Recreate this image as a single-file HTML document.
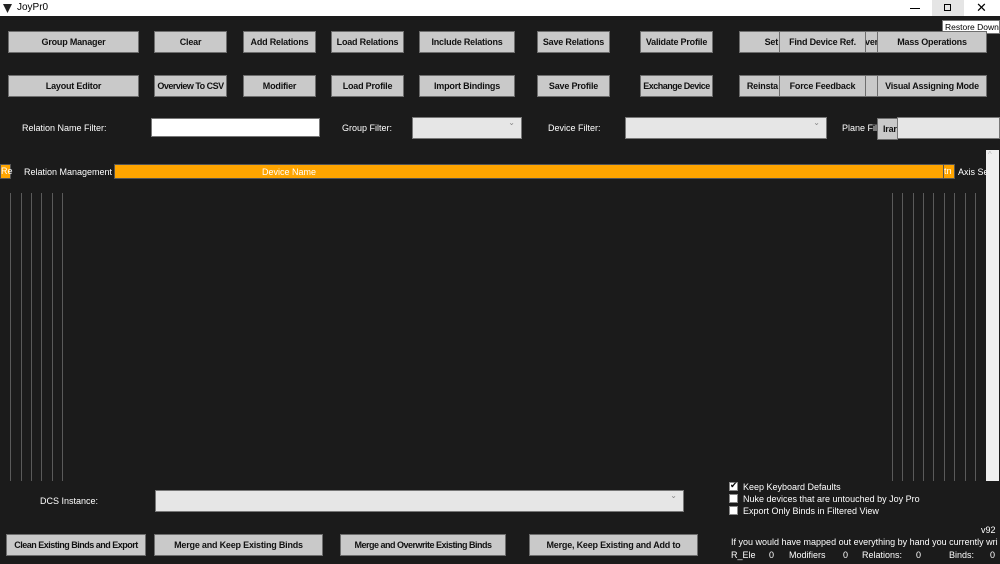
<!DOCTYPE html>
<html><head><meta charset="utf-8"><style>
*{margin:0;padding:0;box-sizing:border-box}
body{width:1000px;height:564px;background:#1b1b1b;font-family:"Liberation Sans",sans-serif;position:relative;overflow:hidden;color:#fff}
.a{position:absolute}
.tb{left:0;top:0;width:1000px;height:16px;background:#fff;color:#000;font-size:10px}
.b{position:absolute;background:#c9c9c9;border:1px solid #6e6e6e;color:#111;font-size:9px;font-weight:bold;display:flex;align-items:center;justify-content:center;white-space:nowrap;overflow:hidden;letter-spacing:-0.2px}
.l{position:absolute;font-size:9px;color:#fff;white-space:nowrap}
.in{position:absolute;background:#fff;border:1px solid #777}
.cb{position:absolute;background:#e6e6e6;border:1px solid #777}
.cb:after{content:"⌄";position:absolute;right:6px;top:0px;font-size:8px;color:#888}
.v{position:absolute;width:1px;background:#5a5a5a;top:193px;height:288px}
.ck{position:absolute;width:9px;height:9px;background:#fff;border:1px solid #888;left:729px}
</style></head><body>
<div class="a tb">
<svg class="a" style="left:3px;top:3px" width="9" height="10" viewBox="0 0 9 10"><path d="M0 1L9 1L4.5 10Z" fill="#222"/></svg>
<span class="a" style="left:17px;top:2px">JoyPr0</span>
<div class="a" style="left:910px;top:8px;width:10px;height:1px;background:#000"></div>
<div class="a" style="left:932px;top:0;width:32px;height:16px;background:#e5e5e5"></div>
<div class="a" style="left:944px;top:4px;width:7px;height:7px;border:1px solid #000"></div>
<span class="a" style="left:976px;top:0px;font-size:13px">✕</span>
</div>
<div class="a" style="left:942px;top:20px;width:58px;height:14px;background:#fff;border:1px solid #777;color:#000;font-size:8.5px;padding:1px 2px;white-space:nowrap;overflow:hidden">Restore Down</div>

<div class="b" style="left:8px;top:31px;width:131px;height:22px">Group Manager</div>
<div class="b" style="left:154px;top:31px;width:73px;height:22px">Clear</div>
<div class="b" style="left:243px;top:31px;width:73px;height:22px">Add Relations</div>
<div class="b" style="left:331px;top:31px;width:73px;height:22px">Load Relations</div>
<div class="b" style="left:419px;top:31px;width:96px;height:22px">Include Relations</div>
<div class="b" style="left:537px;top:31px;width:73px;height:22px">Save Relations</div>
<div class="b" style="left:640px;top:31px;width:73px;height:22px">Validate Profile</div>
<div class="b" style="left:739px;top:31px;width:41px;height:22px;justify-content:flex-end;padding-right:1px">Set</div>
<div class="b" style="left:779px;top:31px;width:87px;height:22px">Find Device Ref.</div>
<div class="b" style="left:865px;top:31px;width:13px;height:22px">ver</div>
<div class="b" style="left:877px;top:31px;width:110px;height:22px">Mass Operations</div>

<div class="b" style="left:8px;top:75px;width:131px;height:22px">Layout Editor</div>
<div class="b" style="left:154px;top:75px;width:73px;height:22px;letter-spacing:-0.5px">Overview To CSV</div>
<div class="b" style="left:243px;top:75px;width:73px;height:22px">Modifier</div>
<div class="b" style="left:331px;top:75px;width:73px;height:22px">Load Profile</div>
<div class="b" style="left:419px;top:75px;width:96px;height:22px">Import Bindings</div>
<div class="b" style="left:537px;top:75px;width:73px;height:22px">Save Profile</div>
<div class="b" style="left:640px;top:75px;width:73px;height:22px;letter-spacing:-0.5px">Exchange Device</div>
<div class="b" style="left:739px;top:75px;width:41px;height:22px;justify-content:flex-end;padding-right:1px">Reinsta</div>
<div class="b" style="left:779px;top:75px;width:87px;height:22px">Force Feedback</div>
<div class="b" style="left:865px;top:75px;width:13px;height:22px"></div>
<div class="b" style="left:877px;top:75px;width:110px;height:22px">Visual Assigning Mode</div>

<div class="l" style="left:22px;top:123px">Relation Name Filter:</div>
<div class="in" style="left:151px;top:118px;width:169px;height:19px"></div>
<div class="l" style="left:342px;top:123px">Group Filter:</div>
<div class="cb" style="left:412px;top:117px;width:110px;height:22px"></div>
<div class="l" style="left:548px;top:123px">Device Filter:</div>
<div class="cb" style="left:625px;top:117px;width:202px;height:22px"></div>
<div class="l" style="left:842px;top:123px">Plane Filt</div>
<div class="b" style="left:877px;top:118px;width:21px;height:22px;justify-content:flex-start;padding-left:5px">Irar</div>
<div class="in" style="left:897px;top:117px;width:103px;height:22px;background:#e6e6e6"></div>

<div class="a" style="left:0;top:164px;width:11px;height:15px;background:#ffa500;border:1px solid #555;font-size:9px;color:#fff;line-height:13px">Re</div>
<div class="l" style="left:24px;top:167px">Relation Management</div>
<div class="a" style="left:114px;top:164px;width:830px;height:15px;background:#ffa500;border:1px solid #555"></div>
<div class="l" style="left:262px;top:167px">Device Name</div>
<div class="a" style="left:943px;top:164px;width:12px;height:15px;background:#ffa500;border:1px solid #555;font-size:9px;color:#fff;line-height:13px">tn</div>
<div class="l" style="left:958px;top:167px">Axis Se</div>
<div class="a" style="left:986px;top:150px;width:13px;height:331px;background:#f0f0f0"></div>
<div class="a" style="left:988px;top:150px;font-size:8px;color:#bbb">^</div>

<div class="v" style="left:10px"></div><div class="v" style="left:21px"></div><div class="v" style="left:31px"></div><div class="v" style="left:41px"></div><div class="v" style="left:52px"></div><div class="v" style="left:62px"></div>
<div class="v" style="left:892px"></div><div class="v" style="left:902px"></div><div class="v" style="left:913px"></div><div class="v" style="left:923px"></div><div class="v" style="left:933px"></div><div class="v" style="left:944px"></div><div class="v" style="left:954px"></div><div class="v" style="left:965px"></div><div class="v" style="left:975px"></div>

<div class="l" style="left:40px;top:496px">DCS Instance:</div>
<div class="cb" style="left:155px;top:490px;width:529px;height:22px"></div>

<div class="ck" style="top:482px"><span style="position:absolute;left:0;top:-3px;font-size:9px;color:#000">✔</span></div>
<div class="l" style="left:743px;top:482px">Keep Keyboard Defaults</div>
<div class="ck" style="top:494px"></div>
<div class="l" style="left:743px;top:494px">Nuke devices that are untouched by Joy Pro</div>
<div class="ck" style="top:506px"></div>
<div class="l" style="left:743px;top:506px">Export Only Binds in Filtered View</div>
<div class="l" style="left:981px;top:525px">v92</div>
<div class="l" style="left:731px;top:537px">If you would have mapped out everything by hand you currently wri</div>
<div class="l" style="left:731px;top:550px">R_Ele</div><div class="l" style="left:769px;top:550px">0</div>
<div class="l" style="left:789px;top:550px">Modifiers</div><div class="l" style="left:843px;top:550px">0</div>
<div class="l" style="left:862px;top:550px">Relations:</div><div class="l" style="left:916px;top:550px">0</div>
<div class="l" style="left:949px;top:550px">Binds:</div><div class="l" style="left:990px;top:550px">0</div>

<div class="b" style="left:6px;top:534px;width:140px;height:22px;letter-spacing:-0.5px">Clean Existing Binds and Export</div>
<div class="b" style="left:154px;top:534px;width:169px;height:22px">Merge and Keep Existing Binds</div>
<div class="b" style="left:340px;top:534px;width:166px;height:22px;letter-spacing:-0.5px">Merge and Overwrite Existing Binds</div>
<div class="b" style="left:529px;top:534px;width:169px;height:22px">Merge, Keep Existing and Add to</div>
</body></html>
